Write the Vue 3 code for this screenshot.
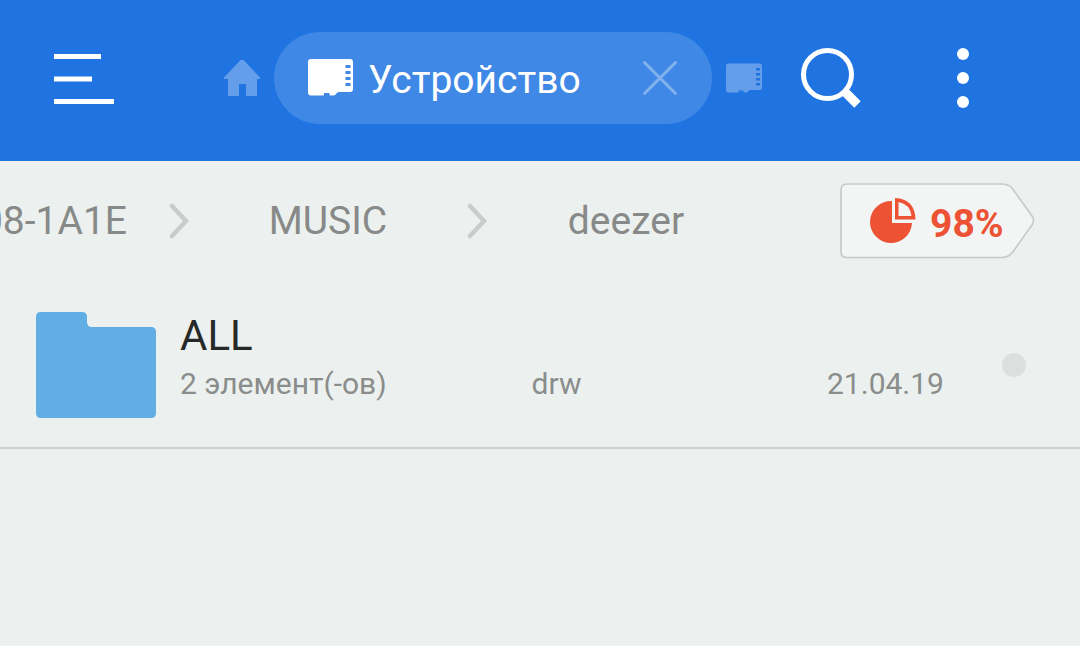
<script setup>
import { ref } from 'vue'

const crumbs = ['08-1A1E', 'MUSIC', 'deezer']
const files = ref([
  { name: 'ALL', info: '2 элемент(-ов)', access: 'drw', date: '21.04.19', selected: false },
])
</script>

<template>
  <div class="app">
    <header class="bar">
      <button class="btn menu" aria-label="Menu">
        <svg width="60" height="50" viewBox="0 0 60 50" fill="#fff">
          <path d="M0 1h47v5H0zM0 23.500h38v5H0zM0 46h60v5H0z" />
        </svg>
      </button>

      <nav class="tabs">
        <button class="btn" aria-label="Home">
          <svg width="36" height="36" viewBox="0 0 36 36" fill="#649eea">
            <path d="M16.500 0h3L36 17.500V19h-3v17H22V24h-7v12H4V19H0v-1.500z" />
          </svg>
        </button>
        <div class="tab">
          <svg width="46" height="38" viewBox="0 0 46 38" fill="#fff">
            <path fill-rule="evenodd" d="M3 0H42Q45 0 45 3V30Q45 33 42 33H31Q29 33 28 35Q27 36.500 25 36.500H22.500Q21.500 36.500 21.500 35.500V34H16V35.500Q16 36.500 15 36.500H3Q0 36.500 0 33.500V3Q0 0 3 0zM37.500 6v3h5V6zM37.500 12v3h5v-3zM37.500 18v3h5v-3zM37.500 24v3h5v-3z" />
          </svg>
          <span class="tab-name">Устройство</span>
          <button class="btn close" aria-label="Close">
            <svg width="36" height="36" viewBox="0 0 36 36" fill="none" stroke="#83b1ef" stroke-width="3" stroke-linecap="round">
              <path d="M2.500 2.500l31 31M33.500 2.500l-31 31" />
            </svg>
          </button>
        </div>
        <button class="btn" aria-label="SD card">
          <svg width="36" height="30" viewBox="0 0 36 30" fill="#649eea">
            <path fill-rule="evenodd" d="M2.500 0.500H33.500Q36 0.500 36 3V24.500Q36 27 33.500 27H24.500Q23 27 22.500 28Q21.500 29.500 20 29.500H17.500V27.500H12.500V29.500H2.500Q0 29.500 0 27V3Q0 0.500 2.500 0.500zM30 5v2.500h4V5zM30 10v2.500h4V10zM30 15v2.500h4V15zM30 20v2.500h4V20z" />
          </svg>
        </button>
      </nav>

      <button class="btn search" aria-label="Search">
        <svg width="60" height="60" viewBox="0 0 60 60" fill="none" stroke="#fff">
          <circle cx="26.500" cy="26.500" r="24" stroke-width="5" />
          <path d="M43 43L56.500 56.500" stroke-width="9" />
        </svg>
      </button>
      <button class="btn more" aria-label="More">
        <svg width="12" height="60" viewBox="0 0 12 60" fill="#fff">
          <circle cx="6" cy="6" r="6" /><circle cx="6" cy="30" r="6" /><circle cx="6" cy="54" r="6" />
        </svg>
      </button>
    </header>

    <div class="path">
      <nav class="crumbs">
        <template v-for="(crumb, i) in crumbs" :key="crumb">
          <svg v-if="i" class="chevron" width="20" height="36" viewBox="0 0 20 36" fill="none" stroke="#cacccb" stroke-width="4.500" stroke-linecap="round">
            <path d="M3 3L17 18L3 33" />
          </svg>
          <a class="crumb" href="#">{{ crumb }}</a>
        </template>
      </nav>
      <button class="btn usage">
        <svg class="tag" width="196" height="76" viewBox="0 0 196 76" fill="#f2f5f4" stroke="#c6c9c8" stroke-width="1.600">
          <path d="M7 1H162Q168 1 172 5L192 33Q195 37.500 192 42L172 70Q168 74.500 162 74.500H7Q1 74.500 1 69V7Q1 1 7 1z" />
        </svg>
        <svg class="pie" width="46" height="46" viewBox="0 0 46 46" fill="#ec5233">
          <path d="M22 3A21 21 0 1 0 42 25H22z" />
          <path fill-rule="evenodd" d="M25 0Q45 1 45.500 21.500H25zM28.500 4V18H41.500Q40 6 28.500 4z" />
        </svg>
        <span class="percent">98%</span>
      </button>
    </div>

    <ul class="list">
      <li v-for="file in files" :key="file.name" class="row">
        <svg class="folder" width="120" height="106" viewBox="0 0 120 106" fill="#60aee3">
          <path d="M5 0H46Q51 0 51 5V10Q51 15 56 15H115Q120 15 120 20V101Q120 106 115 106H5Q0 106 0 101V5Q0 0 5 0z" />
        </svg>
        <div class="details">
          <span class="name">{{ file.name }}</span>
          <div class="meta">
            <span>{{ file.info }}</span>
            <span>{{ file.access }}</span>
            <span class="date">{{ file.date }}</span>
          </div>
        </div>
        <input v-model="file.selected" class="pick" type="checkbox" :aria-label="file.name" />
      </li>
    </ul>
  </div>
</template>

<style>
body {
  margin: 0;
  background: #ecf1ef;
}
</style>

<style scoped>
.app {
  min-height: 100vh;
  background: #ecf1ef;
  font-family: Roboto, "Noto Sans", sans-serif;
}
svg {
  display: block;
  flex: none;
}
.btn {
  padding: 0;
  border: 0;
  background: none;
  font: inherit;
  cursor: pointer;
}
.menu svg {
  overflow: visible;
}
.bar {
  display: flex;
  align-items: center;
  box-sizing: border-box;
  padding: 32px 111px 37px 54px;
  background: #1f74e2;
}
.tabs {
  display: flex;
  align-items: center;
  flex: 1;
  gap: 14px;
  margin: 0 39px 0 110px;
}
.tab {
  display: flex;
  align-items: center;
  flex: 1;
  box-sizing: border-box;
  height: 92px;
  padding: 0 34px;
  border-radius: 46px;
  background: #4088e5;
}
.tab-name {
  flex: 1;
  margin-left: 14px;
  padding-top: 4px;
  color: #fff;
  font-size: 39px;
  line-height: 48px;
}
.more {
  margin-left: 96px;
}
.path {
  display: flex;
  align-items: center;
  padding: 22px 44px 22px 0;
}
.crumbs {
  display: flex;
  align-items: center;
  justify-content: flex-end;
  flex: 1;
  min-width: 0;
  margin-right: 75px;
  overflow: hidden;
}
.crumb {
  flex: 0 0 278px;
  color: #878a88;
  font-size: 39px;
  line-height: 48px;
  text-align: center;
  text-decoration: none;
}
.crumb:first-child {
  box-sizing: border-box;
  padding-right: 42px;
  text-align: right;
}
.usage {
  position: relative;
  display: flex;
  align-items: center;
  box-sizing: border-box;
  width: 196px;
  height: 76px;
  padding-left: 30px;
  gap: 14px;
}
.tag {
  position: absolute;
  inset: 0;
}
.pie,
.percent {
  position: relative;
}
.percent {
  padding-top: 5px;
  color: #ec5233;
  font-size: 39px;
  font-weight: 700;
  line-height: 48px;
}
.list {
  margin: 0;
  padding: 0;
  list-style: none;
}
.row {
  display: flex;
  align-items: center;
  padding: 31px 54px 29px 36px;
  border-bottom: 2px solid #cdd3d0;
}
.details {
  flex: 1;
  align-self: flex-start;
  margin: -2px 58px 0 24px;
}
.name {
  display: block;
  color: #262928;
  font-size: 42px;
  line-height: 52px;
}
.meta {
  display: grid;
  grid-template-columns: 351fr 295fr auto;
  color: #8a8d8b;
  font-size: 30px;
  line-height: 44px;
}
.pick {
  appearance: none;
  width: 24px;
  height: 24px;
  margin: 0;
  border-radius: 50%;
  background: #dddfde;
}
.pick:checked {
  background: #1f74e2;
}
</style>
